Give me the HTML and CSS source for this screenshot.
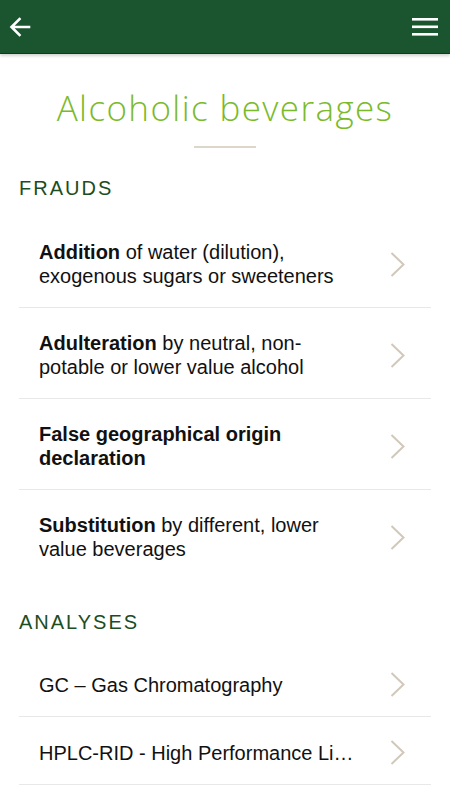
FILE: index.html
```html
<!DOCTYPE html>
<html lang="en">
<head>
    <meta charset="UTF-8">
    <meta name="viewport" content="width=device-width, initial-scale=1.0">
    <title>Alcoholic beverages</title>
    <link rel="stylesheet" href="styles.css">
</head>
<body>

    <header class="topbar">
        <button class="icon-btn" aria-label="Back">
            <svg width="22" height="20" viewBox="0 0 22 20">
                <path d="M20 10H3M10.5 2L2.5 10l8 8" fill="none" stroke="#fff" stroke-width="2.6" stroke-linecap="square"/>
            </svg>
        </button>
        <button class="icon-btn" aria-label="Menu">
            <svg width="26" height="20" viewBox="0 0 26 20">
                <rect x="0" y="1" width="26" height="2.6" fill="#fff"/>
                <rect x="0" y="8.5" width="26" height="2.6" fill="#fff"/>
                <rect x="0" y="16" width="26" height="2.6" fill="#fff"/>
            </svg>
        </button>
    </header>

    <main class="content">
        <h1 class="page-title">Alcoholic beverages</h1>
        <div class="title-rule"></div>

        <h2 class="section-title">Frauds</h2>
        <ul class="item-list">
            <li class="item">
                <p class="item-text"><b>Addition</b> of water (dilution), exogenous sugars or sweeteners</p>
                <svg class="chevron" width="15" height="25" viewBox="0 0 15 25"><polyline points="1.5,1 13.5,12.5 1.5,24" fill="none" stroke="#d2c8ba" stroke-width="2"/></svg>
            </li>
            <li class="item">
                <p class="item-text"><b>Adulteration</b> by neutral, non-potable or lower value alcohol</p>
                <svg class="chevron" width="15" height="25" viewBox="0 0 15 25"><polyline points="1.5,1 13.5,12.5 1.5,24" fill="none" stroke="#d2c8ba" stroke-width="2"/></svg>
            </li>
            <li class="item">
                <p class="item-text"><b>False geographical origin declaration</b></p>
                <svg class="chevron" width="15" height="25" viewBox="0 0 15 25"><polyline points="1.5,1 13.5,12.5 1.5,24" fill="none" stroke="#d2c8ba" stroke-width="2"/></svg>
            </li>
            <li class="item">
                <p class="item-text"><b>Substitution</b> by different, lower value beverages</p>
                <svg class="chevron" width="15" height="25" viewBox="0 0 15 25"><polyline points="1.5,1 13.5,12.5 1.5,24" fill="none" stroke="#d2c8ba" stroke-width="2"/></svg>
            </li>
        </ul>

        <h2 class="section-title analyses">Analyses</h2>
        <ul class="item-list short">
            <li class="item">
                <p class="item-text one-line">GC – Gas Chromatography</p>
                <svg class="chevron" width="15" height="25" viewBox="0 0 15 25"><polyline points="1.5,1 13.5,12.5 1.5,24" fill="none" stroke="#d2c8ba" stroke-width="2"/></svg>
            </li>
            <li class="item">
                <p class="item-text one-line">HPLC-RID - High Performance Liquid Chromatography with Refractive Index Detection</p>
                <svg class="chevron" width="15" height="25" viewBox="0 0 15 25"><polyline points="1.5,1 13.5,12.5 1.5,24" fill="none" stroke="#d2c8ba" stroke-width="2"/></svg>
            </li>
        </ul>
    </main>

</body>
</html>
```

FILE: styles.css
```css
body {
    font-family: "Liberation Sans", Arial, sans-serif;
    margin: 0;
    padding: 0;
    background-color: #fff;
    color: #111;
}

.topbar {
    height: 53px;
    display: flex;
    justify-content: space-between;
    align-items: center;
    padding: 0 12px 0 9px;
    background-color: #1b5530;
    border-bottom: 1px solid #0f3a1c;
    box-shadow: 0 2px 3px rgba(0, 0, 0, 0.18);
}

.icon-btn {
    background: none;
    border: none;
    padding: 0;
    display: flex;
    margin-top: 1px;
}

.content {
    padding: 0 19px;
}

.page-title {
    margin: 33px 0 0;
    font-family: "Open Sans", sans-serif;
    font-weight: 300;
    font-size: 35px;
    line-height: 42px;
    letter-spacing: 1.4px;
    text-align: center;
    color: #7aba2b;
}

.title-rule {
    width: 62px;
    height: 2px;
    margin: 17px auto 0;
    background-color: #ddd6ca;
}

.section-title {
    margin: 28px 0 0;
    font-size: 20px;
    font-weight: normal;
    line-height: 24px;
    letter-spacing: 2px;
    text-transform: uppercase;
    color: #1c4d22;
}

.section-title.analyses {
    margin-top: 30px;
}

.item-list {
    list-style: none;
    margin: 17px 0 0;
    padding: 0;
}

.item {
    display: flex;
    align-items: center;
    padding: 23px 26px 19px 20px;
    border-bottom: 1px solid #e8e8e8;
}

.item-list:first-of-type .item:last-child {
    border-bottom: none;
}

.item-list.short {
    margin-top: 15px;
}

.item-list.short .item {
    padding: 23px 26px 19px 20px;
}

.item-list.short .item:last-child {
    border-bottom: 1px solid #e8e8e8;
}

.item-text {
    flex: 1;
    min-width: 0;
    margin: 0;
    padding-right: 34px;
    font-size: 20px;
    line-height: 24px;
}

.item-text.one-line {
    white-space: nowrap;
    overflow: hidden;
    text-overflow: ellipsis;
}

.chevron {
    flex-shrink: 0;
}
```
